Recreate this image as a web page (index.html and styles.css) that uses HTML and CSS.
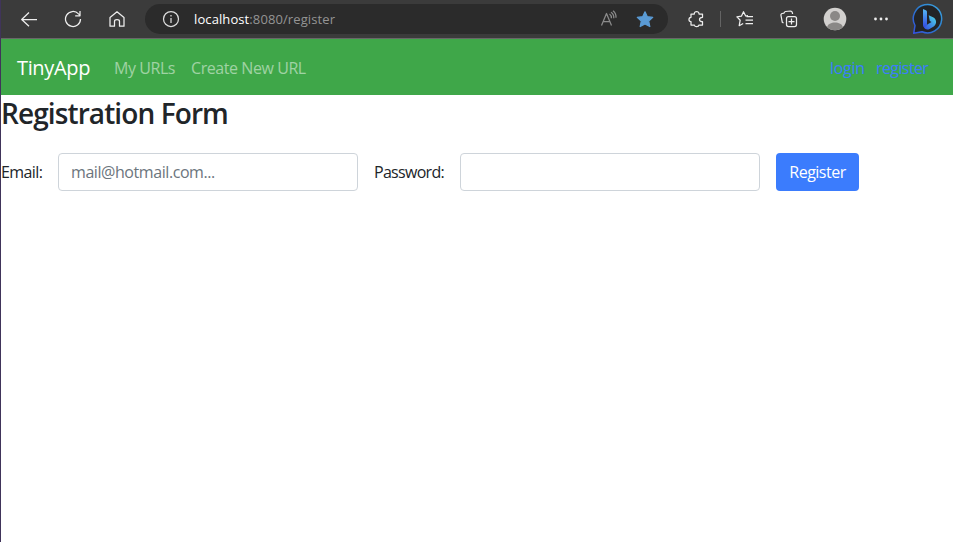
FILE: index.html
```html
<!DOCTYPE html>
<html lang="en">
<head>
<meta charset="utf-8">
<title>TinyApp</title>
<link rel="stylesheet" href="styles.css">
</head>
<body>
<header class="toolbar">
  <span class="tool"><svg width="18" height="18" viewBox="0 0 18 18"><path d="M17 9.500H1.500M9 2.500l-7.300 7L9 16.200"/></svg></span>
  <span class="tool"><svg width="18" height="18" viewBox="0 0 18 18"><path d="M16.500 9a7.500 7.500 0 1 1-2-5.100L16 5.400M16 1v4.800h-4.800"/></svg></span>
  <span class="tool"><svg width="18" height="18" viewBox="0 0 18 18"><path d="M2 7.500 9 1.800l7 5.700v8.700h-4.500v-4.700c0-1.200-1-1.800-2.500-1.800s-2.500.6-2.500 1.800v4.700H2z"/></svg></span>
  <div class="address">
    <svg class="info" width="18" height="18" viewBox="0 0 18 18"><circle cx="9" cy="9" r="7.500"/><path d="M9 8v5M9 5v1.500"/></svg>
    <span class="url"><b>localhost</b>:8080/register</span>
    <svg class="read" width="18" height="18" viewBox="0 0 18 18"><path d="M1.500 15.500 6.500 3.500l5 12M3.200 11.500h6.600M9.500 4c1.500 1 2 2.500 1.900 4.300M11 2.300c2 1.300 3 3.300 2.800 6M13 .8c2.200 1.800 3.200 4 3 7"/></svg>
    <svg class="star" width="18" height="18" viewBox="0 0 18 18"><path d="m9 1.800 2.300 4.900 5.400.7-4 3.700 1.100 5.400L9 13.900l-4.800 2.600 1.100-5.400-4-3.700 5.400-.7z"/></svg>
  </div>
  <span class="tool extensions"><svg width="18" height="18" viewBox="0 0 18 18"><path d="M3 4h3.300c-.3-3.300 4.900-3.300 4.700 0h3.500v3.300c-4 0-4 4.400 0 4.400V15h-3.600c-.2 2.300-4.200 2.300-4.500 0H3v-3.300c-2.700-.2-2.700-4.200 0-4.400z"/></svg></span>
  <span class="divider"></span>
  <span class="tool favorites"><svg width="18" height="18" viewBox="0 0 18 18"><path d="M12 5.700 9.700 6 7.500 1.700 5.400 6.200l-4.500.7 3.300 3.300-1 5.500 4-2.200M10.500 6.500H17M9.500 10H17M9.500 13.500H17"/></svg></span>
  <span class="tool"><svg width="18" height="18" viewBox="0 0 18 18"><path d="M3.500 13 2.300 12.300 1 5.500c-.3-1 .2-1.800 1.200-2L4 3.200c.2-1 .7-1.500 1.500-1.700l5-.5c1 0 1.600.5 1.800 1.500l.3 1.500"/><rect x="6.500" y="6.500" width="10" height="10" rx="2"/><path d="M11.500 8.500v6M8.500 11.500h6"/></svg></span>
  <span class="tool profile"><svg width="24" height="24" viewBox="0 0 24 24"><circle class="disc" cx="12" cy="12" r="11.300"/><circle class="person" cx="12" cy="9" r="5"/><path class="person" d="M4.200 20c1-6 14.600-6 15.600 0-4 4.300-11.600 4.300-15.600 0z"/></svg></span>
  <span class="tool more"><svg width="18" height="18" viewBox="0 0 18 18"><circle cx="3.500" cy="9" r="1.400"/><circle cx="9" cy="9" r="1.400"/><circle cx="14.500" cy="9" r="1.400"/></svg></span>
  <span class="tool bing"><svg width="32" height="32" viewBox="0 0 32 32">
    <defs>
      <linearGradient id="ring" x1="0" y1="1" x2="1" y2="0"><stop offset="0" stop-color="#3450e0"/><stop offset=".5" stop-color="#2b78cc"/><stop offset="1" stop-color="#3da7e0"/></linearGradient>
      <linearGradient id="stem" x1="0" y1="0" x2="0" y2="1"><stop offset="0" stop-color="#55b9f5"/><stop offset="1" stop-color="#3349e0"/></linearGradient>
      <linearGradient id="bowl" x1="0" y1="1" x2="1" y2="0"><stop offset="0" stop-color="#3349e0"/><stop offset="1" stop-color="#4ee0e8"/></linearGradient>
    </defs>
    <path fill="#222426" stroke="url(#ring)" stroke-width="1.500" d="M1.700 30.300 3 22.500A14.200 14.200 0 1 1 10 28.800z"/>
    <path fill="url(#bowl)" d="m16.700 12.200 4.300 2c4 2 4 6.800.7 9.400l-4.200 2.300c-2.500 1.200-5 .2-6-2.400l3-1.500 5-3-1.700-.9z"/>
    <path fill="url(#stem)" d="m11 6 2.800 1.200c.8.400 1.200 1 1.200 2V22l-2.500 2.500c-1-.5-1.500-1.500-1.500-2.500z"/>
  </svg></span>
</header>
<nav class="navbar">
  <a class="brand">TinyApp</a>
  <a class="nav-link urls">My URLs</a>
  <a class="nav-link create">Create New URL</a>
  <div class="account"><a class="login">login</a><a class="signup">register</a></div>
</nav>
<main>
  <h3>Registration Form</h3>
  <form class="form">
    <label class="email" for="email">Email:</label>
    <input id="email" type="email" placeholder="mail@hotmail.com...">
    <label class="password" for="password">Password:</label>
    <input id="password" type="password">
    <button type="button">Register</button>
  </form>
</main>
</body>
</html>
```
FILE: styles.css
```css
* { box-sizing: border-box; }
body {
  margin: 0;
  min-height: 542px;
  border-left: 1px solid #40345a;
  background: #fff;
  color: #212529;
  font: 16px/24px "Open Sans", "Noto Sans", sans-serif;
  letter-spacing: -.43px;
  overflow: hidden;
}
.toolbar {
  display: flex;
  align-items: center;
  height: 39px;
  padding-left: 6px;
  background: #3b3b3b;
  border-bottom: 1px solid #686868;
}
.tool {
  display: flex;
  flex: 0 0 44px;
  justify-content: center;
}
svg {
  display: block;
  flex: none;
  fill: none;
  stroke: #eee;
  stroke-width: 1.25;
  stroke-linejoin: round;
}
.address {
  display: flex;
  align-items: center;
  width: 523px;
  height: 30px;
  margin: 0 7px 0 6px;
  padding: 0 14px 0 17px;
  border-radius: 15px;
  background: #2b2b2b;
}
.info { stroke: #ddd; }
.url {
  margin-left: 14px;
  color: #949494;
  font-size: 13px;
  line-height: 20px;
  letter-spacing: .1px;
  white-space: nowrap;
}
.url b { color: #fff; font-weight: 400; }
.read { margin-left: auto; stroke: #8b8b8b; }
.star { margin-left: 18px; fill: #5a9bd5; stroke: #5a9bd5; }
.divider { width: 1px; height: 16px; margin-left: 1px; background: #646464; }
.favorites { margin-left: 2px; }
.profile { margin-left: 2px; }
.profile svg { stroke: none; }
.disc { fill: #d2d0ce; }
.person { fill: #8a8886; }
.more { margin-left: 2px; }
.more svg { fill: #eee; stroke: none; }
.bing { margin-left: 3px; }
.bing svg { stroke: none; }
.navbar {
  display: flex;
  align-items: center;
  height: 56px;
  padding: 2px 24px 0 16px;
  background: #3fa749;
  white-space: nowrap;
}
.brand {
  width: 97px;
  color: #fff;
  font-size: 20px;
  line-height: 30px;
  letter-spacing: -.35px;
}
.nav-link { color: rgba(255, 255, 255, .5); }
.urls { width: 77px; }
.account { display: flex; margin-left: auto; color: #3b7cfd; }
.login { width: 46px; letter-spacing: -.3px; }
.signup { width: 53px; letter-spacing: -.6px; }
h3 {
  margin: 0 0 23px;
  padding-top: 1px;
  font-size: 28px;
  font-weight: 600;
  line-height: 34px;
  letter-spacing: -.9px;
  white-space: nowrap;
}
.form { display: flex; align-items: center; }
.email { width: 57px; letter-spacing: -.6px; }
.password { width: 86px; letter-spacing: -.7px; }
input {
  width: 300px;
  height: 38px;
  margin-right: 16px;
  padding: 6px 12px;
  border: 1px solid #ced4da;
  border-radius: 4px;
  background: #fff;
  font: inherit;
  letter-spacing: inherit;
}
input::placeholder { color: #6c757d; opacity: 1; }
button {
  width: 83px;
  height: 38px;
  padding: 0;
  border: 0;
  border-radius: 4px;
  background: #3b7cfd;
  color: #fff;
  font: inherit;
  letter-spacing: -.5px;
}
```
